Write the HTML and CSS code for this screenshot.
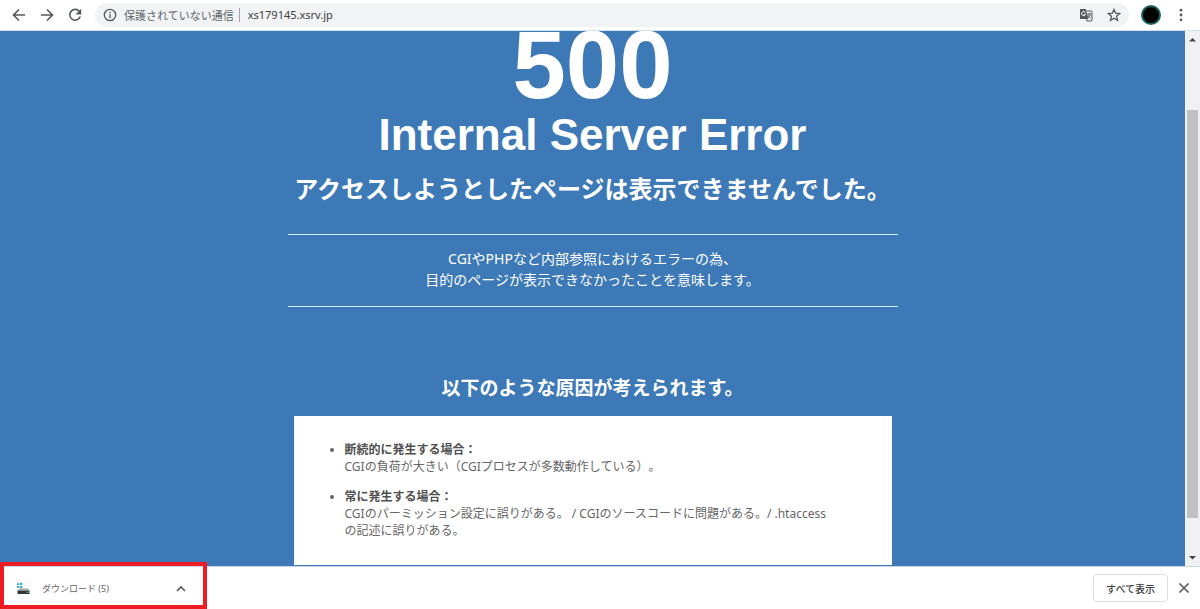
FILE: index.html
```html
<!DOCTYPE html>
<html lang="ja">
<head>
<meta charset="utf-8">
<title>500 Internal Server Error</title>
<link rel="stylesheet" href="styles.css">
</head>
<body>
<header class="toolbar">
  <button class="icon-btn" aria-label="戻る"><svg width="16" height="16" viewBox="0 0 16 16"><path d="M14 8H3M8 2.5L2.5 8L8 13.5"/></svg></button>
  <button class="icon-btn" aria-label="進む"><svg width="16" height="16" viewBox="0 0 16 16"><path d="M2 8H13M8 2.5L13.5 8L8 13.5"/></svg></button>
  <button class="icon-btn" aria-label="再読み込み"><svg width="16" height="16" viewBox="0 0 16 16"><path d="M12.6 4.6A5.4 5.4 0 1 0 13.3 9.6"/><path class="solid" d="M14.2 1.8V7.4H8.6Z"/></svg></button>
  <div class="address">
    <svg class="info" width="14" height="14" viewBox="0 0 14 14"><circle cx="7" cy="7" r="5.7"/><path d="M7 6.2V10.2M7 3.8V5.2"/></svg>
    <span class="security">保護されていない通信</span>
    <span class="divider"></span>
    <span class="url">xs179145.xsrv.jp</span>
    <button class="icon-btn translate" aria-label="翻訳"><svg width="14" height="14" viewBox="0 0 14 14"><path class="solid" d="M1.5 1H6.7L9.5 11H1.5Q1 11 1 10.5V1.5Q1 1 1.5 1Z"/><path class="thin" d="M7.5 3H12.5Q13 3 13 3.5V12.5Q13 13 12.5 13H8L7.3 11M8.3 6H12M10.2 5V6M11.5 6Q11 8.5 8.8 9.8M9 7.2Q10 9 11.8 10"/><path class="light" d="M6.3 4.6A2 2 0 1 0 6.5 6.2H4.8"/></svg></button>
    <button class="icon-btn" aria-label="ブックマーク"><svg width="14" height="14" viewBox="0 0 14 14"><path class="star" d="M7 1.5L8.6 5.2L12.7 5.6L9.6 8.3L10.5 12.3L7 10.2L3.5 12.3L4.4 8.3L1.3 5.6L5.4 5.2Z"/></svg></button>
  </div>
  <button class="avatar" aria-label="プロフィール"></button>
  <button class="icon-btn" aria-label="メニュー"><svg width="16" height="16" viewBox="0 0 16 16"><circle class="solid" cx="8" cy="3.2" r="1.4"/><circle class="solid" cx="8" cy="8" r="1.4"/><circle class="solid" cx="8" cy="12.8" r="1.4"/></svg></button>
</header>

<div class="viewport">
  <main class="page">
    <p class="code">500</p>
    <h1 class="title">Internal Server Error</h1>
    <h2 class="subtitle">アクセスしようとしたページは表示できませんでした。</h2>
    <p class="summary">CGIやPHPなど内部参照におけるエラーの為、<br>目的のページが表示できなかったことを意味します。</p>
    <h3 class="causes-title">以下のような原因が考えられます。</h3>
    <ul class="causes">
      <li><strong>断続的に発生する場合：</strong><br>CGIの負荷が大きい（CGIプロセスが多数動作している）。</li>
      <li><strong>常に発生する場合：</strong><br>CGIのパーミッション設定に誤りがある。 / CGIのソースコードに問題がある。/ .htaccess<br>の記述に誤りがある。</li>
    </ul>
  </main>
  <div class="scrollbar">
    <svg width="15" height="17" viewBox="0 0 15 17"><path d="M4 10.5L7.5 7L11 10.5Z"/></svg>
    <div class="track"><div class="thumb"></div></div>
    <svg width="15" height="17" viewBox="0 0 15 17"><path d="M4 7L7.5 10.5L11 7Z"/></svg>
  </div>
</div>

<footer class="downloads">
  <div class="item">
    <svg width="14" height="14" viewBox="0 0 14 14"><path fill="#22a7dc" d="M1 1.4L3 1V3H1ZM4 .9L6.2 .5V3H4ZM1 4H3V6L1 5.7ZM4 4H6.2V6.4L4 6.1Z"/><path fill="#a9adb0" d="M3 6.5H12.5L13.5 9H1.5Z"/><path fill="#30363a" d="M1.5 8.7H13.5V12H1.5Z"/><path fill="#48c34a" d="M10.5 9.7H12.5V10.8H10.5Z"/></svg>
    <a class="file" href="#">ダウンロード (5)</a>
    <button class="icon-btn" aria-label="オプション"><svg width="12" height="12" viewBox="0 0 12 12"><path d="M2 8L6 4L10 8"/></svg></button>
  </div>
  <button class="show-all">すべて表示</button>
  <button class="icon-btn" aria-label="閉じる"><svg width="14" height="14" viewBox="0 0 14 14"><path d="M2.5 2.5L11.5 11.5M11.5 2.5L2.5 11.5"/></svg></button>
</footer>
</body>
</html>
```

FILE: styles.css
```css
* { box-sizing: border-box; }

body {
  margin: 0;
  height: 100vh;
  display: flex;
  flex-direction: column;
  overflow: hidden;
  background: #fff;
  color: #5f6368;
  font-family: "Noto Sans", "Noto Sans CJK JP", sans-serif;
  text-spacing-trim: space-all;
}

h1, h2, h3, p, ul { margin: 0; }

button {
  padding: 0;
  border: 0;
  background: none;
  font-family: inherit;
}

svg {
  display: block;
  flex: none;
}

.icon-btn { flex: none; }

.icon-btn svg,
.info {
  fill: none;
  stroke: #54575b;
  stroke-width: 1.6;
}

.icon-btn .solid {
  fill: #54575b;
  stroke: none;
}

.icon-btn .star { stroke-width: 1.3; }
.icon-btn .thin { stroke-width: 1; }
.icon-btn .light { stroke: #fff; stroke-width: 1; }

/* Toolbar */
.toolbar {
  flex: none;
  display: flex;
  align-items: center;
  gap: 12px;
  height: 31px;
  padding: 0 11px 1px;
  border-bottom: 1px solid #d5dfe9;
}

.address {
  flex: 1;
  display: flex;
  align-items: center;
  height: 24px;
  padding: 0 8px;
  border-radius: 12px;
  background: #f1f3f4;
  font-size: 11px;
  white-space: nowrap;
}

.info { stroke-width: 1.3; }

.security { margin-left: 7px; }

.divider {
  width: 1px;
  height: 14px;
  margin: 0 8px 0 5px;
  background: #a3a6a9;
}

.url { color: #3c4043; }

.translate { margin: 0 14px 0 auto; }

.avatar {
  width: 20px;
  height: 20px;
  border: 2px solid #14695e;
  border-radius: 50%;
  background: #000;
}

/* Page area */
.viewport {
  flex: 1;
  min-height: 0;
  display: flex;
}

.page {
  flex: 1;
  display: flex;
  flex-direction: column;
  align-items: center;
  overflow: hidden;
  background: #3d79b6;
  color: #fff;
  text-align: center;
}

.code,
.title {
  font-family: "Liberation Sans", Arial, sans-serif;
  font-weight: 700;
}

.code {
  font-size: 96px;
  line-height: 67px;
}

.title {
  margin-top: 11px;
  font-size: 44px;
  line-height: 52px;
}

.subtitle {
  margin-top: 10px;
  font-size: 24px;
  line-height: 36px;
}

.summary {
  width: 100%;
  max-width: 610px;
  margin-top: 27px;
  padding: 13px 0 16px;
  border: solid #d9ecfa;
  border-width: 1px 0;
  font-size: 14px;
  line-height: 21px;
}

.causes-title {
  margin-top: 67px;
  font-size: 19px;
  line-height: 28px;
}

.causes {
  flex: 1 0 auto;
  width: 100%;
  max-width: 598px;
  margin: 14px 0 1px;
  padding: 25px 32px 25px 51px;
  background: #fff;
  color: #666;
  font-size: 12px;
  line-height: 17px;
  text-align: left;
}

.causes li + li { margin-top: 13px; }

.causes strong { color: #505050; }

.scrollbar {
  flex: none;
  display: flex;
  flex-direction: column;
  width: 15px;
  background: #f1f1f1;
  fill: #444;
}

.track {
  flex: 1;
  display: grid;
  grid-template-rows: 62fr 408fr 31fr;
  padding: 0 2px;
}

.thumb {
  grid-row: 2;
  background: #c1c1c1;
}

/* Downloads bar */
.downloads {
  flex: none;
  display: flex;
  align-items: center;
  gap: 9px;
  height: 43px;
  padding-right: 9px;
  border-top: 1px solid #cbd7e2;
}

.item {
  position: relative;
  display: flex;
  align-items: center;
  align-self: stretch;
  width: 207px;
  padding: 1px 20px 0 16px;
}

/* Highlight frame laid over the download item */
.item::after {
  content: "";
  position: absolute;
  inset: -5px 0 0;
  border: 4px solid #ed1c24;
  pointer-events: none;
}

.file {
  margin: 0 auto 0 12px;
  color: #5f6368;
  font-size: 9px;
  text-decoration: none;
}

.show-all {
  height: 28px;
  margin-left: auto;
  padding: 0 12px;
  border: 1px solid #dadce0;
  border-radius: 4px;
  color: #3c4043;
  font-size: 10px;
  font-weight: 500;
}
```
